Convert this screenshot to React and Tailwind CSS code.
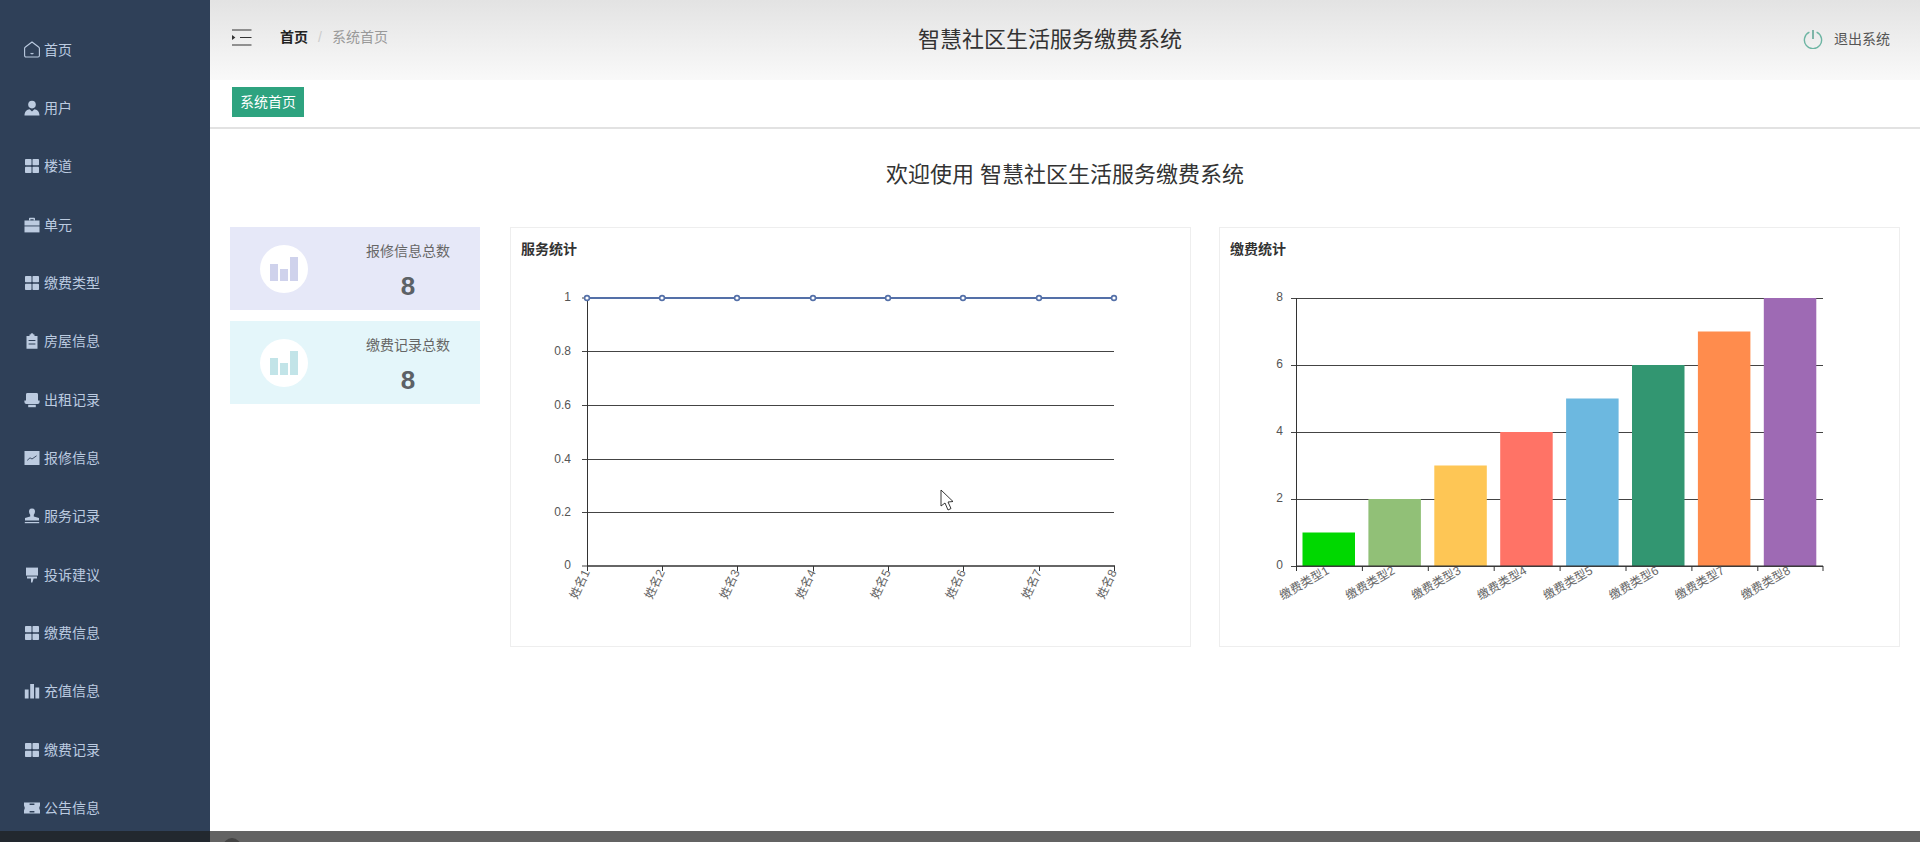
import React from "react";

const Grid = () => (
  <svg viewBox="0 0 16 16" className="w-4 h-4" fill="currentColor">
    <rect x="1" y="1" width="6.5" height="6.2" rx="0.8" />
    <rect x="8.5" y="1" width="6.5" height="6.2" rx="0.8" />
    <rect x="1" y="8.8" width="6.5" height="6.2" rx="0.8" />
    <rect x="8.5" y="8.8" width="6.5" height="6.2" rx="0.8" />
  </svg>
);

const icons = {
  home: (
    <svg viewBox="0 0 16 17" className="w-4 h-[17px]" fill="none" stroke="currentColor" strokeWidth="1.1">
      <path d="M8 1 L14.6 6 Q15.4 6.5 15.4 7.5 V14.6 Q15.4 16 14 16 H2 Q.6 16 .6 14.6 V7.5 Q.6 6.5 1.4 6 Z" />
      <path d="M6.6 12.2 Q8 13.2 9.4 12.2" />
    </svg>
  ),
  user: (
    <svg viewBox="0 0 16 16" className="w-4 h-4" fill="currentColor">
      <circle cx="8" cy="4.6" r="3.8" />
      <path d="M0.5 15.5 C0.5 11.5 3 9.4 5.6 9.2 L8 11.4 L10.4 9.2 C13 9.4 15.5 11.5 15.5 15.5 Z" />
    </svg>
  ),
  case: (
    <svg viewBox="0 0 16 16" className="w-4 h-4" fill="currentColor">
      <path d="M5 3.5 V1.6 Q5 .8 5.8 .8 H10.2 Q11 .8 11 1.6 V3.5 H9.6 V2.2 H6.4 V3.5 Z" />
      <rect x="0.5" y="3.5" width="15" height="5" />
      <rect x="0.5" y="9.4" width="15" height="6" />
    </svg>
  ),
  clip: (
    <svg viewBox="0 0 16 16" className="w-4 h-4" fill="currentColor">
      <path fillRule="evenodd" d="M5.5 1.5 H6.5 Q6.7 .3 8 .3 Q9.3 .3 9.5 1.5 H10.5 V3 H13.5 V15.7 H2.5 V3 H5.5 Z M4.6 7 V8 H11.4 V7 Z M4.6 10.4 V11.4 H11.4 V10.4 Z" />
    </svg>
  ),
  tray: (
    <svg viewBox="0 0 16 16" className="w-4 h-4" fill="currentColor">
      <path d="M3.4 1 H12.6 Q14 1 14 2.4 V8.4 H15.6 V10 Q15.6 12 13.6 12 H2.4 Q.4 12 .4 10 V8.4 H2 V2.4 Q2 1 3.4 1 Z" />
      <path d="M4.2 12.8 H11.8 V15.2 H4.2 Z" />
    </svg>
  ),
  area: (
    <svg viewBox="0 0 16 16" className="w-4 h-4">
      <rect x="0.5" y="1" width="15" height="14" fill="currentColor" />
      <path d="M3.2 10.4 L6 7.8 L8 9 L12.6 5.8" fill="none" stroke="#2f4058" strokeWidth="0.9" />
    </svg>
  ),
  stamp: (
    <svg viewBox="0 0 16 16" className="w-4 h-4" fill="currentColor">
      <path d="M8 .6 Q11 .6 11 3.6 Q11 5.4 9.8 6.8 V8.6 L15 10 V12.6 H1 V10 L6.2 8.6 V6.8 Q5 5.4 5 3.6 Q5 .6 8 .6 Z" />
      <rect x="0.8" y="14" width="14.4" height="1.2" />
    </svg>
  ),
  brush: (
    <svg viewBox="0 0 16 16" className="w-4 h-4" fill="currentColor">
      <path d="M2 .6 H14 V8.6 H2 Z" />
      <path d="M3 9.6 H13 V11.4 H9.6 L8.4 15.6 H7 V11.4 H3 Z" />
    </svg>
  ),
  bars: (
    <svg viewBox="0 0 16 16" className="w-4 h-4" fill="currentColor">
      <rect x="0.8" y="6.5" width="3.8" height="9" />
      <rect x="6.2" y="1" width="3.8" height="14.5" />
      <rect x="11.4" y="4.5" width="3.8" height="11" />
    </svg>
  ),
  ticket: (
    <svg viewBox="0 0 16 16" className="w-4 h-4" fill="currentColor">
      <path fillRule="evenodd" d="M0 2.4 H16 V5.6 Q14.4 8 16 10.6 V13.6 H0 V10.6 Q1.6 8 0 5.6 Z M5.6 5 H10.4 V3.4 H5.6 Z M5.6 12.6 H10.4 V11 H5.6 Z" />
    </svg>
  ),
};

const menu = [
  ["首页", icons.home],
  ["用户", icons.user],
  ["楼道", <Grid />],
  ["单元", icons.case],
  ["缴费类型", <Grid />],
  ["房屋信息", icons.clip],
  ["出租记录", icons.tray],
  ["报修信息", icons.area],
  ["服务记录", icons.stamp],
  ["投诉建议", icons.brush],
  ["缴费信息", <Grid />],
  ["充值信息", icons.bars],
  ["缴费记录", <Grid />],
  ["公告信息", icons.ticket],
];

function StatCard({ title, bg, bar }) {
  return (
    <div className={`flex items-center h-[83px] pl-[30px] ${bg}`}>
      <div className="w-12 h-12 rounded-full bg-white flex items-end justify-center pb-[12px] gap-[2px]">
        <span className={`w-[8px] h-[17px] ${bar}`}></span>
        <span className={`w-[8px] h-[12px] ${bar}`}></span>
        <span className={`w-[8px] h-[24px] ${bar}`}></span>
      </div>
      <div className="flex-1 ml-[28px] pt-[6px] text-center">
        <div className="text-sm leading-5 text-[#666]">{title}</div>
        <div className="text-[26px] leading-8 mt-[9px] font-bold text-[#5c6166]">8</div>
      </div>
    </div>
  );
}

function LineChart() {
  const ys = [
    [351, "0.8"],
    [405, "0.6"],
    [459, "0.4"],
    [512, "0.2"],
  ];
  const xs = [587, 662, 737, 813, 888, 963, 1039, 1114];
  return (
    <svg viewBox="511 259 679 386" className="block w-[679px] h-[386px]">
      {ys.map(([y, t]) => (
        <g key={t}>
          <line x1="582" x2="1114" y1={y + 0.5} y2={y + 0.5} stroke="#444" />
          <text x="571" y={y + 1} textAnchor="end" dominantBaseline="middle" fontSize="12" fill="#555">{t}</text>
        </g>
      ))}
      <text x="571" y="298" textAnchor="end" dominantBaseline="middle" fontSize="12" fill="#555">1</text>
      <text x="571" y="566" textAnchor="end" dominantBaseline="middle" fontSize="12" fill="#555">0</text>
      <line x1="582" x2="587" y1="298" y2="298" stroke="#444" />
      <line x1="582" x2="587" y1="566" y2="566" stroke="#444" />
      <line x1="587.5" x2="587.5" y1="298" y2="566" stroke="#333" />
      <line x1="587" x2="1115" y1="566" y2="566" stroke="#333" strokeWidth="1.5" />
      {xs.map((x, i) => (
        <g key={x}>
          <line x1={x + 0.5} x2={x + 0.5} y1="566" y2="571" stroke="#333" />
          <text x={x + 3} y="572" textAnchor="end" fontSize="12" fill="#666" transform={`rotate(-65 ${x + 3} 572)`}>{`姓名${i + 1}`}</text>
        </g>
      ))}
      <line x1="587" x2="1114" y1="298" y2="298" stroke="#5470a8" strokeWidth="2" />
      {xs.map((x) => (
        <circle key={x} cx={x} cy="298" r="2.4" fill="#fff" stroke="#5470a8" strokeWidth="1.6" />
      ))}
      <path d="M941 490 V506 L945 503 L948 510 L951 508.5 L948 502 L953 501.5 Z" fill="#fff" stroke="#222" strokeWidth="0.9" />
    </svg>
  );
}

function BarChart() {
  const colors = ["#00d800", "#91c077", "#fec655", "#ff7366", "#6cb8e0", "#329671", "#ff8c4d", "#9e6ab4"];
  const ys = [
    [298, "8"],
    [365, "6"],
    [432, "4"],
    [499, "2"],
    [566, "0"],
  ];
  const step = 65.9;
  return (
    <svg viewBox="1220 259 679 386" className="block w-[679px] h-[386px]">
      {ys.map(([y, t]) => (
        <g key={t}>
          <line x1="1291" x2="1823" y1={y + 0.5} y2={y + 0.5} stroke="#444" />
          <text x="1283" y={y} textAnchor="end" dominantBaseline="middle" fontSize="12" fill="#555">{t}</text>
        </g>
      ))}
      <line x1="1296.5" x2="1296.5" y1="298" y2="566" stroke="#333" />
      {colors.map((c, i) => {
        const h = (i + 1) * 33.5;
        const left = 1296 + i * step;
        return (
          <g key={c}>
            <rect x={left + 6.5} y={566 - h} width="52.5" height={h} fill={c} />
            <line x1={left + 0.5} x2={left + 0.5} y1="566" y2="571" stroke="#333" />
            <text x={left + step / 2 + 1} y="573" textAnchor="end" fontSize="12" fill="#666" transform={`rotate(-30 ${left + step / 2 + 1} 573)`}>{`缴费类型${i + 1}`}</text>
          </g>
        );
      })}
      <line x1="1823" x2="1823" y1="566" y2="571" stroke="#333" />
      <line x1="1296" x2="1823" y1="566" y2="566" stroke="#333" />
    </svg>
  );
}

function Panel({ title, children }) {
  return (
    <div className="w-[681px] h-[420px] border border-[#eeeeee] bg-white">
      <div className="pt-[11px] pl-[10px] text-sm leading-5 font-semibold text-[#333]">{title}</div>
      {children}
    </div>
  );
}

export default function App() {
  return (
    <div className="h-screen flex flex-col overflow-hidden bg-white font-['Liberation_Sans','Noto_Sans_CJK_SC',sans-serif]">
      <div className="flex flex-1 min-h-0">
        <div className="w-[210px] shrink-0 bg-[#2f4058] pt-[20.5px] overflow-hidden">
          {menu.map(([label, icon]) => (
            <div key={label} className="h-[58.35px] flex items-center pl-6 gap-1 text-sm text-[#bccbe0]">
              <span className="w-4 flex justify-center">{icon}</span>
              <span>{label}</span>
            </div>
          ))}
        </div>

        <div className="flex-1 min-w-0 flex flex-col">
          <div className="h-[80px] shrink-0 pb-[2px] flex items-center bg-gradient-to-b from-[#e3e3e3] to-[#f9f9f9]">
            <div className="w-[200px] flex items-center pl-[22px] pb-[4px] text-sm">
              <svg viewBox="0 0 20 17" className="w-5 h-[17px]" fill="none" stroke="#333" strokeWidth="1.1">
                <path d="M0 1h19.5M8 8.5h11.5M0 16h19.5" />
                <path d="M0 6 L3.4 8.5 L0 11 Z" fill="#333" stroke="none" />
              </svg>
              <span className="ml-7 font-semibold text-[#222]">首页</span>
              <span className="mx-[10px] text-[#ccc]">/</span>
              <span className="text-[#999] whitespace-nowrap">系统首页</span>
            </div>
            <div className="flex-1 text-center text-[22px] text-[#333]">智慧社区生活服务缴费系统</div>
            <div className="w-[230px] flex items-center justify-end gap-[11px] pr-[30px] text-sm text-[#555]">
              <svg viewBox="0 0 20 20" className="w-5 h-5" fill="none" stroke="#6db5a3" strokeWidth="1.4">
                <path d="M6.4 3.2 A8.6 8.6 0 1 0 13.6 3.2" />
                <path d="M10 1 V10" stroke="#4f9d8a" />
              </svg>
              <span>退出系统</span>
            </div>
          </div>

          <div className="h-[49px] shrink-0 pl-[22px] pt-[7px] bg-white border-b-2 border-[#e2e2e2]">
            <span className="inline-block h-[30px] px-2 leading-[30px] text-sm text-white bg-[#2ea37f]">系统首页</span>
          </div>

          <div className="flex-1 pt-[31px] pl-[20px]">
            <div className="h-[30px] leading-[30px] pr-[20px] text-center text-[22px] text-[#333]">欢迎使用 智慧社区生活服务缴费系统</div>
            <div className="flex mt-[37px]">
              <div className="w-[250px] mr-[30px] flex flex-col gap-[11px]">
                <StatCard title="报修信息总数" bg="bg-[#e6e8f8]" bar="bg-[#cfd2ec]" />
                <StatCard title="缴费记录总数" bg="bg-[#e4f6fa]" bar="bg-[#c2e4e8]" />
              </div>
              <div className="flex gap-[28px]">
                <Panel title="服务统计">
                  <LineChart />
                </Panel>
                <Panel title="缴费统计">
                  <BarChart />
                </Panel>
              </div>
            </div>
          </div>
        </div>
      </div>

      <div className="h-[11px] shrink-0 flex">
        <div className="w-[210px] bg-[#22282f]"></div>
        <div className="flex-1 bg-[#636363] pl-[13px] overflow-hidden">
          <div className="w-[18px] h-[18px] mt-[7px] rounded-full bg-[#444]"></div>
        </div>
      </div>
    </div>
  );
}
